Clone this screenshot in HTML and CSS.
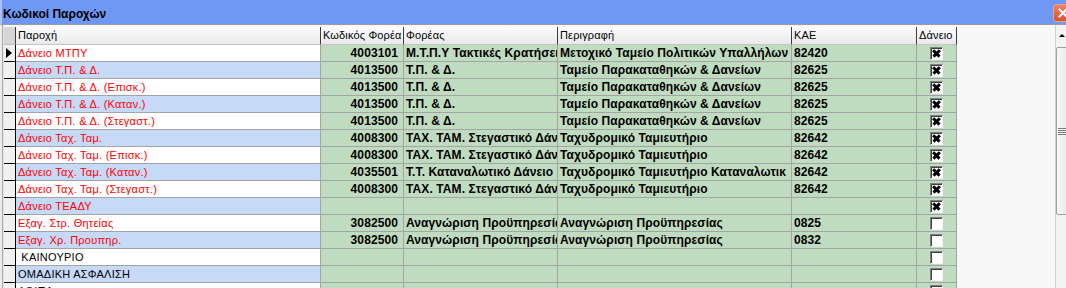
FILE: index.html
```html
<!DOCTYPE html>
<html lang="el">
<head>
  <meta charset="UTF-8">
  <title>Κωδικοί Παροχών</title>
  <link rel="stylesheet" href="styles.css">
</head>
<body>
  <div class="window">
    <div class="titlebar">
      <span class="title">Κωδικοί Παροχών</span>
      <span class="close"></span>
    </div>
    <div class="content">
      <div class="frame-left"></div>
      <div class="grid">
        <div class="row head">
          <div class="sel"></div>
          <div class="h">Παροχή</div>
          <div class="h">Κωδικός Φορέα</div>
          <div class="h">Φορέας</div>
          <div class="h">Περιγραφή</div>
          <div class="h">ΚΑΕ</div>
          <div class="h">Δάνειο</div>
        </div>
        <div class="rows">
          <div class="row">
            <div class="sel current"><span class="arrow"></span></div>
            <div class="c pr">Δάνειο ΜΤΠΥ</div>
            <div class="c code">4003101</div>
            <div class="c">Μ.Τ.Π.Υ Τακτικές Κρατήσεις</div>
            <div class="c">Μετοχικό Ταμείο Πολιτικών Υπαλλήλων</div>
            <div class="c">82420</div>
            <div class="c chkcell"><span class="chk on"></span></div>
          </div>
          <div class="row">
            <div class="sel"></div>
            <div class="c pr">Δάνειο Τ.Π. &amp; Δ.</div>
            <div class="c code">4013500</div>
            <div class="c">Τ.Π. &amp; Δ.</div>
            <div class="c">Ταμείο Παρακαταθηκών &amp; Δανείων</div>
            <div class="c">82625</div>
            <div class="c chkcell"><span class="chk on"></span></div>
          </div>
          <div class="row">
            <div class="sel"></div>
            <div class="c pr">Δάνειο Τ.Π. &amp; Δ. (Επισκ.)</div>
            <div class="c code">4013500</div>
            <div class="c">Τ.Π. &amp; Δ.</div>
            <div class="c">Ταμείο Παρακαταθηκών &amp; Δανείων</div>
            <div class="c">82625</div>
            <div class="c chkcell"><span class="chk on"></span></div>
          </div>
          <div class="row">
            <div class="sel"></div>
            <div class="c pr">Δάνειο Τ.Π. &amp; Δ. (Καταν.)</div>
            <div class="c code">4013500</div>
            <div class="c">Τ.Π. &amp; Δ.</div>
            <div class="c">Ταμείο Παρακαταθηκών &amp; Δανείων</div>
            <div class="c">82625</div>
            <div class="c chkcell"><span class="chk on"></span></div>
          </div>
          <div class="row">
            <div class="sel"></div>
            <div class="c pr">Δάνειο Τ.Π. &amp; Δ. (Στεγαστ.)</div>
            <div class="c code">4013500</div>
            <div class="c">Τ.Π. &amp; Δ.</div>
            <div class="c">Ταμείο Παρακαταθηκών &amp; Δανείων</div>
            <div class="c">82625</div>
            <div class="c chkcell"><span class="chk on"></span></div>
          </div>
          <div class="row">
            <div class="sel"></div>
            <div class="c pr">Δάνειο Ταχ. Ταμ.</div>
            <div class="c code">4008300</div>
            <div class="c">ΤΑΧ. ΤΑΜ. Στεγαστικό Δάνειο</div>
            <div class="c">Ταχυδρομικό Ταμιευτήριο</div>
            <div class="c">82642</div>
            <div class="c chkcell"><span class="chk on"></span></div>
          </div>
          <div class="row">
            <div class="sel"></div>
            <div class="c pr">Δάνειο Ταχ. Ταμ. (Επισκ.)</div>
            <div class="c code">4008300</div>
            <div class="c">ΤΑΧ. ΤΑΜ. Στεγαστικό Δάνειο</div>
            <div class="c">Ταχυδρομικό Ταμιευτήριο</div>
            <div class="c">82642</div>
            <div class="c chkcell"><span class="chk on"></span></div>
          </div>
          <div class="row">
            <div class="sel"></div>
            <div class="c pr">Δάνειο Ταχ. Ταμ. (Καταν.)</div>
            <div class="c code">4035501</div>
            <div class="c">Τ.Τ. Καταναλωτικό Δάνειο</div>
            <div class="c">Ταχυδρομικό Ταμιευτήριο Καταναλωτικ</div>
            <div class="c">82642</div>
            <div class="c chkcell"><span class="chk on"></span></div>
          </div>
          <div class="row">
            <div class="sel"></div>
            <div class="c pr">Δάνειο Ταχ. Ταμ. (Στεγαστ.)</div>
            <div class="c code">4008300</div>
            <div class="c">ΤΑΧ. ΤΑΜ. Στεγαστικό Δάνειο</div>
            <div class="c">Ταχυδρομικό Ταμιευτήριο</div>
            <div class="c">82642</div>
            <div class="c chkcell"><span class="chk on"></span></div>
          </div>
          <div class="row">
            <div class="sel"></div>
            <div class="c pr">Δάνειο ΤΕΑΔΥ</div>
            <div class="c code"></div>
            <div class="c"></div>
            <div class="c"></div>
            <div class="c"></div>
            <div class="c chkcell"><span class="chk on"></span></div>
          </div>
          <div class="row">
            <div class="sel"></div>
            <div class="c pr">Εξαγ. Στρ. Θητείας</div>
            <div class="c code">3082500</div>
            <div class="c">Αναγνώριση Προϋπηρεσίας</div>
            <div class="c">Αναγνώριση Προϋπηρεσίας</div>
            <div class="c">0825</div>
            <div class="c chkcell"><span class="chk"></span></div>
          </div>
          <div class="row">
            <div class="sel"></div>
            <div class="c pr">Εξαγ. Χρ. Προυπηρ.</div>
            <div class="c code">3082500</div>
            <div class="c">Αναγνώριση Προϋπηρεσίας</div>
            <div class="c">Αναγνώριση Προϋπηρεσίας</div>
            <div class="c">0832</div>
            <div class="c chkcell"><span class="chk"></span></div>
          </div>
          <div class="row">
            <div class="sel"></div>
            <div class="c pr plain">&nbsp;ΚΑΙΝΟΥΡΙΟ</div>
            <div class="c code"></div>
            <div class="c"></div>
            <div class="c"></div>
            <div class="c"></div>
            <div class="c chkcell"><span class="chk"></span></div>
          </div>
          <div class="row">
            <div class="sel"></div>
            <div class="c pr plain">ΟΜΑΔΙΚΗ ΑΣΦΑΛΙΣΗ</div>
            <div class="c code"></div>
            <div class="c"></div>
            <div class="c"></div>
            <div class="c"></div>
            <div class="c chkcell"><span class="chk"></span></div>
          </div>
          <div class="row">
            <div class="sel"></div>
            <div class="c pr plain">ΛΟΙΠΑ</div>
            <div class="c code"></div>
            <div class="c"></div>
            <div class="c"></div>
            <div class="c"></div>
            <div class="c chkcell"><span class="chk"></span></div>
          </div>
        </div>
      </div>
      <div class="filler"></div>
      <div class="scrollbar">
        <div class="sb-up"><span class="sb-arrow"></span></div>
        <div class="sb-thumb"><span class="grip"></span></div>
      </div>
    </div>
  </div>
</body>
</html>
```
FILE: styles.css
```css
html,
body {
  margin: 0;
  overflow: hidden;
  background: #f7f7f7;
}

.window {
  width: 1074px;
  height: 288px;
  font-family: "Liberation Sans", Arial, sans-serif;
}

.titlebar {
  height: 25px;
  box-sizing: border-box;
  background: #6f98f5;
  border-bottom: 1px solid #9c9c9c;
  border-left: 2px solid #a9c1f8;
  display: flex;
  justify-content: space-between;
  align-items: flex-start;
}

.title {
  font: bold 12px/16px "Liberation Sans", Arial, sans-serif;
  color: #000;
  padding: 6px 0 0 1px;
}

.close {
  position: relative;
  width: 21px;
  height: 18px;
  margin-top: 4px;
  box-sizing: border-box;
  border: 1px solid #f0a08a;
  border-radius: 3px;
  background: linear-gradient(#ec8466, #d9532c);
}

.close::before,
.close::after {
  content: "";
  position: absolute;
  left: 3px;
  top: 7px;
  width: 12px;
  height: 2px;
  background: #fff;
  transform: rotate(45deg);
}

.close::after {
  transform: rotate(-45deg);
}

.content {
  display: flex;
  height: 263px;
}

.frame-left {
  width: 4px;
  background: linear-gradient(to right, #ececec 0 2px, #a8a8a8 2px 3px, #e4e4e4 3px);
}

.grid {
  width: 953px;
  padding-top: 2px;
  overflow: hidden;
}

.row {
  display: grid;
  grid-template-columns: 12px 305px 83px 154px 234px 125px 40px;
  height: 17px;
}

.row > div {
  box-sizing: border-box;
  border-right: 1px solid #a4a4a4;
  border-bottom: 1px solid #a4a4a4;
  overflow: hidden;
  white-space: nowrap;
  text-overflow: clip;
}

.head {
  height: 18px;
}

.head > div {
  background: linear-gradient(#fdfdfd, #e9e9ec);
  border-right-color: #3c3c3c;
  border-bottom-color: #c4c4c4;
  font: 11px/17px "Liberation Sans", Arial, sans-serif;
  letter-spacing: 0.15px;
  padding-left: 2px;
}

.head .sel {
  background: #d6d6d6;
  border-right-color: #3c3c3c;
}

.rows .sel {
  background: #f0f0f0;
  border-right-color: #000;
  border-bottom-color: #000;
  position: relative;
}

.arrow {
  position: absolute;
  left: 2px;
  top: 3px;
  border-top: 5px solid transparent;
  border-bottom: 5px solid transparent;
  border-left: 6px solid #000;
}

.c {
  background: #c0dcc0;
  font: bold 12px/16px "Liberation Sans", Arial, sans-serif;
  letter-spacing: 0.1px;
  padding-left: 2px;
}

.c.code {
  text-align: right;
  padding: 0 5px 0 0;
}

.c.pr {
  background: #fff;
  font-weight: normal;
  font-size: 11px;
  letter-spacing: 0.25px;
  color: #ff0000;
}

.rows .row:nth-child(even) .pr {
  background: #c6d9f7;
}

.c.pr.plain {
  color: #000;
}

.chkcell {
  display: flex;
  justify-content: center;
  align-items: center;
  padding: 0;
}

.chk {
  position: relative;
  width: 13px;
  height: 13px;
  box-sizing: border-box;
  border: 1px solid;
  border-color: #808080 #f4f4f4 #f4f4f4 #808080;
  background: #fff;
  box-shadow: inset 1px 1px #404040;
}

.chk.on::before,
.chk.on::after {
  content: "";
  position: absolute;
  left: 1px;
  top: 4px;
  width: 9px;
  height: 2.5px;
  background: #000;
  transform: rotate(45deg);
}

.chk.on::after {
  transform: rotate(-45deg);
}

.filler {
  flex: 1;
  background: #f7f7f7;
}

.scrollbar {
  width: 19px;
  box-sizing: border-box;
  padding-top: 2px;
  background: #f3f3f3;
  border-left: 1px solid #d0d0d0;
}

.sb-up {
  height: 17px;
  position: relative;
}

.sb-arrow {
  position: absolute;
  left: 3px;
  top: 7px;
  border-left: 3px solid transparent;
  border-right: 3px solid transparent;
  border-bottom: 3px solid #000;
}

.sb-thumb {
  height: 168px;
  margin-top: 3px;
  box-sizing: border-box;
  border: 1px solid #a0a0a0;
  border-radius: 2px;
  background: linear-gradient(to right, #f6f6f6, #e4e4e4);
  display: flex;
  align-items: center;
}

.grip {
  width: 9px;
  height: 7px;
  margin-left: 1px;
  background: repeating-linear-gradient(#7a7a7a 0 1px, #f4f4f4 1px 2px);
}
```
